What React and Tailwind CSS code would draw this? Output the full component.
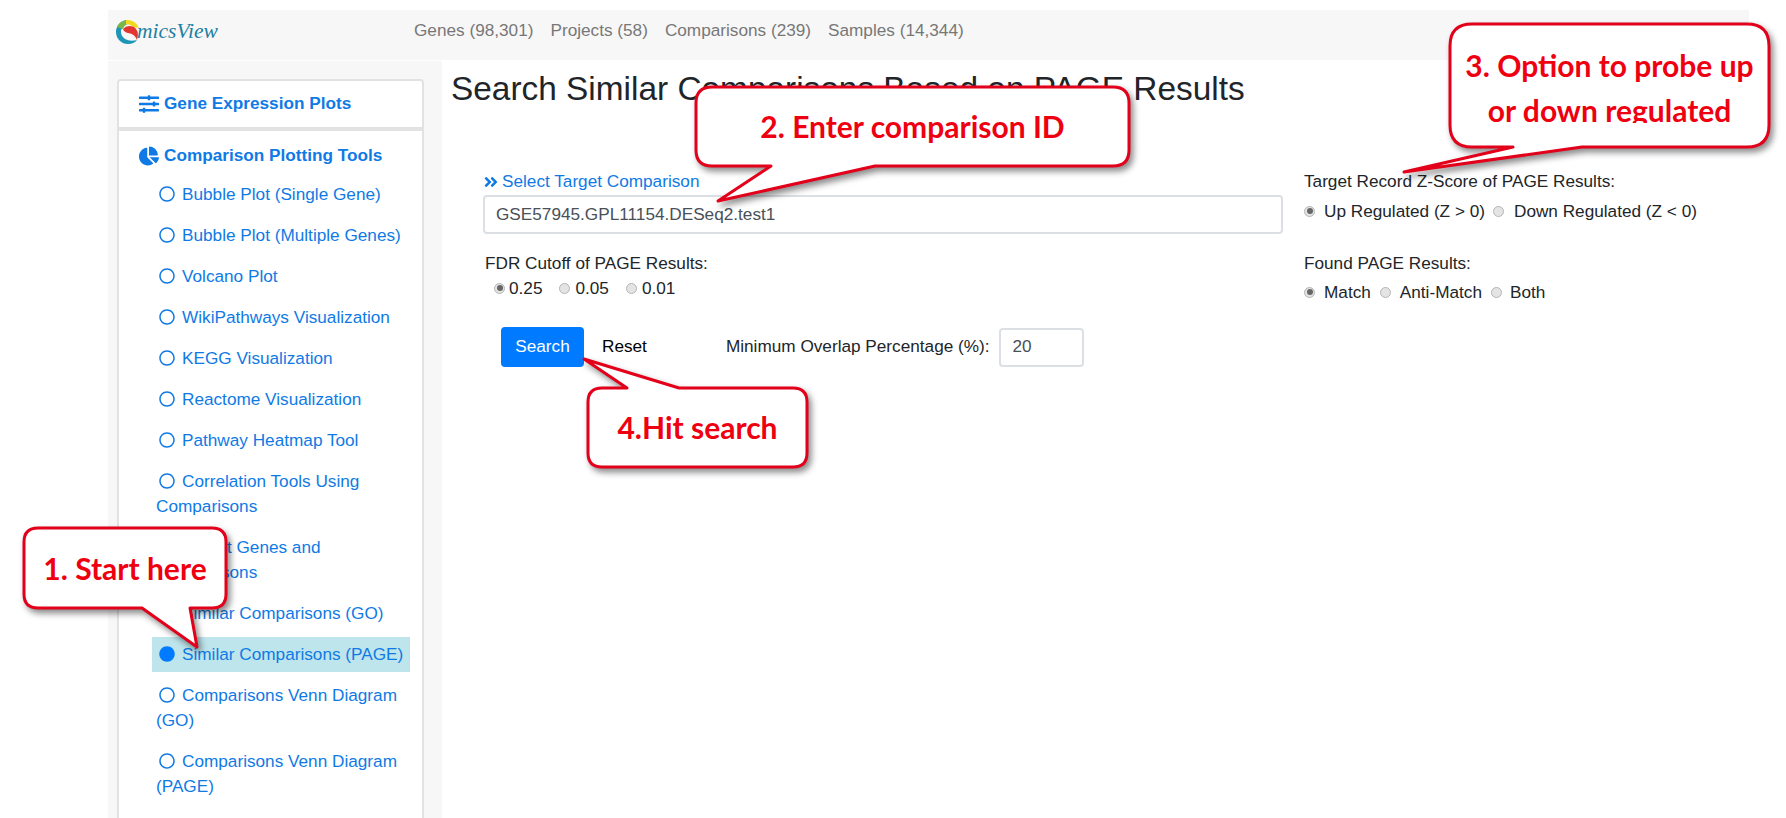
import {
  FaAngleDoubleRight,
  FaChartPie,
  FaCircle,
  FaRegCircle,
  FaSlidersH,
} from "react-icons/fa";

const links = [
  "Bubble Plot (Single Gene)",
  "Bubble Plot (Multiple Genes)",
  "Volcano Plot",
  "WikiPathways Visualization",
  "KEGG Visualization",
  "Reactome Visualization",
  "Pathway Heatmap Tool",
  "Correlation Tools Using Comparisons",
  "Export Genes and Comparisons",
  "Similar Comparisons (GO)",
  "Similar Comparisons (PAGE)",
  "Comparisons Venn Diagram (GO)",
  "Comparisons Venn Diagram (PAGE)",
];

function bubblePath(w, h, r, tail) {
  const { a, b, x, y, top } = tail;
  const topEdge = top ? `L${a} 0 L${x} ${y} L${b} 0 ` : "";
  const bottomEdge = top ? "" : `L${b} ${h} L${x} ${y} L${a} ${h} `;
  return (
    `M${r} 0 ${topEdge}L${w - r} 0 Q${w} 0 ${w} ${r} L${w} ${h - r} ` +
    `Q${w} ${h} ${w - r} ${h} ${bottomEdge}L${r} ${h} Q0 ${h} 0 ${h - r} L0 ${r} Q0 0 ${r} 0 Z`
  );
}

function Callout({ className, w, h, r, tail, children }) {
  return (
    <div className={`absolute z-10 ${className}`}>
      <svg
        className="absolute inset-0 size-full overflow-visible drop-shadow-[3px_4px_3px_rgba(0,0,0,0.45)]"
        viewBox={`0 0 ${w} ${h}`}
      >
        <path
          d={bubblePath(w, h, r, tail)}
          fill="#fff"
          stroke="#e2001a"
          strokeWidth="3"
          strokeLinejoin="round"
        />
      </svg>
      <div className="absolute inset-0 flex flex-col items-center justify-center font-['Lato',sans-serif] text-[30px] font-bold text-[#ee0010]">
        {children}
      </div>
    </div>
  );
}

function Radio({ checked }) {
  return (
    <span className="inline-flex size-[11px] shrink-0 items-center justify-center rounded-full border border-[#b5b5b5] bg-[#e4e4e4]">
      {checked && <span className="size-[6px] rounded-full bg-[#666]"></span>}
    </span>
  );
}

function Logo() {
  return (
    <div className="flex items-center">
      <svg width="24" height="26" viewBox="0 0 24 26">
        <path d="M12 1 A12 12 0 0 0 0 13 A12 12 0 0 0 12 25 Q18 25 21 21 Q14 23 9 20 Q4 16 5 11 Z" fill="#1b95b8" />
        <path d="M12 1 A12 12 0 0 0 1 8 L7 10 Q8 6 12 5 Z" fill="#7ab648" />
        <path d="M10 1 A12 12 0 0 1 23 9 L17 8 Q14 5 10 5 Z" fill="#f4d820" />
        <path d="M7 10 Q11 5 18 8 Q24 12 21 21 Q19 15 12 14 Q8 13 7 10 Z" fill="#e2352f" />
      </svg>
      <span className="-ml-[3px] font-['Liberation_Serif',serif] text-[21.5px] leading-none text-[#1d7fa3] italic">
        micsView
      </span>
    </div>
  );
}

export default function App() {
  return (
    <div className="relative h-[818px] overflow-hidden bg-white pt-[10px] pr-[37px] pl-[108px] font-['Liberation_Sans',Arial,sans-serif] text-[17.2px] text-[#212529]">
      <nav className="flex h-[50px] bg-[#f7f7f7]">
        <div className="w-[306px] pt-[9px] pl-[8px]">
          <Logo />
        </div>
        <div className="flex gap-[17px] pt-[8px] text-[#777]">
          <span>Genes (98,301)</span>
          <span>Projects (58)</span>
          <span>Comparisons (239)</span>
          <span>Samples (14,344)</span>
        </div>
      </nav>

      <div className="mt-px flex">
        <aside className="h-[800px] w-[334px] shrink-0 bg-[#f7f7f7] px-[9px] pt-[18px]">
          <div className="w-[307px] rounded-t border-2 border-[#e2e2e2] bg-white text-[#0f7ae5]">
            <div className="flex h-[46px] items-center gap-[5px] pl-[20px] font-bold">
              <FaSlidersH className="size-[20px]" />
              Gene Expression Plots
            </div>
            <div className="border-t-[4px] border-[#e2e2e2] pt-[12px] pb-[80px] pl-[20px]">
              <div className="mb-[8px] flex items-center gap-[5px] font-bold">
                <FaChartPie className="size-[20px]" />
                Comparison Plotting Tools
              </div>
              <ul className="pr-[12px] pl-[13px]">
                {links.map((link) => {
                  const active = link === "Similar Comparisons (PAGE)";
                  return (
                    <li
                      key={link}
                      className={
                        active
                          ? "mb-[6px] bg-[#bee5eb] px-[4px] py-[5px] leading-[25px]"
                          : "mb-[6px] px-[4px] py-[5px] leading-[25px]"
                      }
                    >
                      {active ? (
                        <FaCircle className="mr-[7px] ml-[3px] inline size-[16px] align-[-2px] text-[#007bff]" />
                      ) : (
                        <FaRegCircle className="mr-[7px] ml-[3px] inline size-[16px] align-[-2px]" />
                      )}
                      {link}
                    </li>
                  );
                })}
              </ul>
            </div>
          </div>
        </aside>

        <main className="min-w-0 flex-1 pl-[9px]">
          <h1 className="pt-[7px] text-[33.4px] leading-[42px]">
            Search Similar Comparisons Based on PAGE Results
          </h1>
          <div className="mt-[60px] flex pl-[32px]">
            <div className="w-[800px]">
              <div className="flex h-[23px] items-center gap-[3px] text-[#0f7ae5]">
                <FaAngleDoubleRight className="size-[16px]" />
                Select Target Comparison
              </div>
              <div className="mt-[2px] flex h-[39px] items-center rounded border-2 border-[#dcdfe3] pl-[11px] text-[#495057]">
                GSE57945.GPL11154.DESeq2.test1
              </div>
              <div className="mt-[17px] pl-[2px] leading-[24px]">FDR Cutoff of PAGE Results:</div>
              <div className="mt-[1px] flex items-center pl-[11px] leading-[24px]">
                <Radio checked />
                <span className="ml-[4px]">0.25</span>
                <span className="ml-[17px]"><Radio /></span>
                <span className="ml-[5px]">0.05</span>
                <span className="ml-[17px]"><Radio /></span>
                <span className="ml-[5px]">0.01</span>
              </div>
              <div className="mt-[27px] flex items-center pl-[18px]">
                <button className="h-[40px] w-[83px] rounded bg-[#007bff] text-white">Search</button>
                <span className="ml-[18px] text-black">Reset</span>
                <span className="ml-[79px]">Minimum Overlap Percentage (%):</span>
                <div className="ml-[9px] flex h-[39px] w-[85px] items-center rounded border-2 border-[#dcdfe3] pl-[12px] text-[#495057]">
                  20
                </div>
              </div>
            </div>

            <div className="pl-[21px]">
              <div className="h-[23px] leading-[23px]">Target Record Z-Score of PAGE Results:</div>
              <div className="mt-[6px] flex items-center leading-[24px]">
                <Radio checked />
                <span className="ml-[9px]">Up Regulated (Z &gt; 0)</span>
                <span className="ml-[8px]"><Radio /></span>
                <span className="ml-[10px]">Down Regulated (Z &lt; 0)</span>
              </div>
              <div className="mt-[28px] leading-[24px]">Found PAGE Results:</div>
              <div className="mt-[5px] flex items-center leading-[24px]">
                <Radio checked />
                <span className="ml-[9px]">Match</span>
                <span className="ml-[9px]"><Radio /></span>
                <span className="ml-[9px]">Anti-Match</span>
                <span className="ml-[9px]"><Radio /></span>
                <span className="ml-[8px]">Both</span>
              </div>
            </div>
          </div>
        </main>
      </div>

      <Callout
        className="top-[528px] left-[24px] h-[80px] w-[202px]"
        w={202}
        h={80}
        r={14}
        tail={{ a: 118, b: 166, x: 173, y: 119 }}
      >
        <span>1. Start here</span>
      </Callout>
      <Callout
        className="top-[87px] left-[696px] h-[79px] w-[433px]"
        w={433}
        h={79}
        r={16}
        tail={{ a: 75, b: 179, x: 22, y: 114 }}
      >
        <span>2. Enter comparison ID</span>
      </Callout>
      <Callout
        className="top-[24px] left-[1450px] h-[123px] w-[319px]"
        w={319}
        h={123}
        r={22}
        tail={{ a: 63, b: 132, x: -46, y: 148 }}
      >
        <span className="mt-[-6px] leading-[45px]">3. Option to probe up</span>
        <span className="h-[35px] overflow-hidden leading-[45px]">or down regulated</span>
      </Callout>
      <Callout
        className="top-[388px] left-[588px] h-[79px] w-[219px]"
        w={219}
        h={79}
        r={14}
        tail={{ a: 39, b: 91, x: -4, y: -29, top: true }}
      >
        <span>4.Hit search</span>
      </Callout>
    </div>
  );
}
